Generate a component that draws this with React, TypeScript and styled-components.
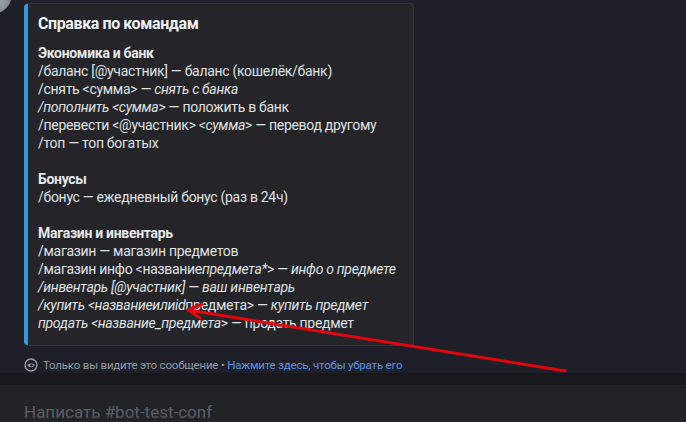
import React from 'react';
import styled, { createGlobalStyle } from 'styled-components';

const GlobalStyle = createGlobalStyle`
  * { box-sizing: border-box; }
  html, body {
    margin: 0;
    padding: 0;
    background: #1e1f28;
    font-family: Roboto, "Noto Sans", "Liberation Sans", sans-serif;
    overflow: hidden;
  }
`;

const Page = styled.div`
  width: 686px;
  height: 422px;
  display: flex;
  flex-direction: column;
  position: relative;
  overflow: hidden;
`;

const Chat = styled.div`
  height: 376px;
  padding: 3px 0 0 24px;
  position: relative;
  background: #1e1f28;
`;

const Avatar = styled.div`
  position: absolute;
  left: -28px;
  top: -26px;
  width: 40px;
  height: 40px;
  border-radius: 50%;
  background: radial-gradient(circle at 70% 70%, #9aa3ad, #5d646d 60%, #3b3f47);
`;

const Embed = styled.div`
  width: 390px;
  height: 343px;
  display: flex;
  background: #252529;
  border: 1px solid #34353b;
  border-left: none;
  border-radius: 4px;
  overflow: hidden;
`;

const Bar = styled.div`
  width: 4px;
  flex-shrink: 0;
  background: #3498db;
`;

const Body = styled.div`
  padding: 9px 12px 0 10px;
  color: #dfe1e4;
  font-size: 14px;
  line-height: 18px;
  letter-spacing: -0.3px;
`;

const Title = styled.div`
  font-size: 16px;
  font-weight: 700;
  line-height: 22px;
  letter-spacing: -0.4px;
  color: #f2f3f5;
  margin-bottom: 9px;
`;

const Section = styled.div`
  margin-bottom: 18px;
`;

const Heading = styled.div`
  font-weight: 700;
  color: #e6e8ea;
`;

const Line = styled.div`
  white-space: nowrap;
`;

const I = styled.em`
  font-style: italic;
`;

const Footer = styled.div`
  display: flex;
  align-items: center;
  gap: 5px;
  margin-top: 12px;
  font-size: 11.5px;
  letter-spacing: -0.2px;
  color: #949ba4;
`;

const Link = styled.span`
  color: #5a95e6;
`;

const Band = styled.div`
  height: 12px;
  background: #19191d;
`;

const Composer = styled.div`
  flex: 1;
  background: #222327;
  padding: 17px 0 0 24px;
  font-size: 17px;
  color: #5c5f66;
`;

const Overlay = styled.svg`
  position: absolute;
  left: 0;
  top: 0;
  pointer-events: none;
`;

function EyeIcon() {
  return (
    <svg width="14" height="14" viewBox="0 0 16 16">
      <circle cx="8" cy="8" r="6.8" fill="none" stroke="#949ba4" strokeWidth="1.6" />
      <path d="M3.8 8.4 C5.2 5.4 10.8 5.4 12.2 8.4 C10.8 11.2 5.2 11.2 3.8 8.4 Z" fill="#949ba4" />
      <circle cx="8.6" cy="8.3" r="1.5" fill="#1e1f28" />
    </svg>
  );
}

export default function App() {
  return (
    <>
      <GlobalStyle />
      <Page>
        <Chat>
          <Avatar />
          <Embed>
            <Bar />
            <Body>
              <Title>Справка по командам</Title>
              <Section>
                <Heading>Экономика и банк</Heading>
                <Line>/баланс [@участник] — баланс (кошелёк/банк)</Line>
                <Line>
                  /снять &lt;сумма&gt; — <I>снять с банка</I>
                </Line>
                <Line>
                  <I>/пополнить &lt;сумма</I>&gt; — положить в банк
                </Line>
                <Line>
                  /перевести &lt;@участник&gt; <I>&lt;сумма</I>&gt; — перевод другому
                </Line>
                <Line>/топ — топ богатых</Line>
              </Section>
              <Section>
                <Heading>Бонусы</Heading>
                <Line>/бонус — ежедневный бонус (раз в 24ч)</Line>
              </Section>
              <Section>
                <Heading>Магазин и инвентарь</Heading>
                <Line>/магазин — магазин предметов</Line>
                <Line>
                  /магазин инфо &lt;название<I>предмета*</I>&gt; — <I>инфо о предмете</I>
                </Line>
                <Line>
                  <I>/инвентарь [@участник]</I> — <I>ваш инвентарь</I>
                </Line>
                <Line>
                  <I>/купить &lt;названиеилиid</I>предмета&gt; — <I>купить предмет</I>
                </Line>
                <Line>
                  <I>продать &lt;название_предмета</I>&gt; — продать предмет
                </Line>
              </Section>
            </Body>
          </Embed>
          <Footer>
            <EyeIcon />
            <span>
              Только вы видите это сообщение • <Link>Нажмите здесь, чтобы убрать его</Link>
            </span>
          </Footer>
        </Chat>
        <Band />
        <Composer>Написать #bot-test-conf</Composer>
        <Overlay width="686" height="422" viewBox="0 0 686 422">
          <g stroke="#e0060c" strokeWidth="3" strokeLinecap="round" fill="none">
            <line x1="565" y1="371" x2="188" y2="310" />
            <polyline points="202,304 188,310 200,318" strokeLinejoin="round" />
          </g>
        </Overlay>
      </Page>
    </>
  );
}
